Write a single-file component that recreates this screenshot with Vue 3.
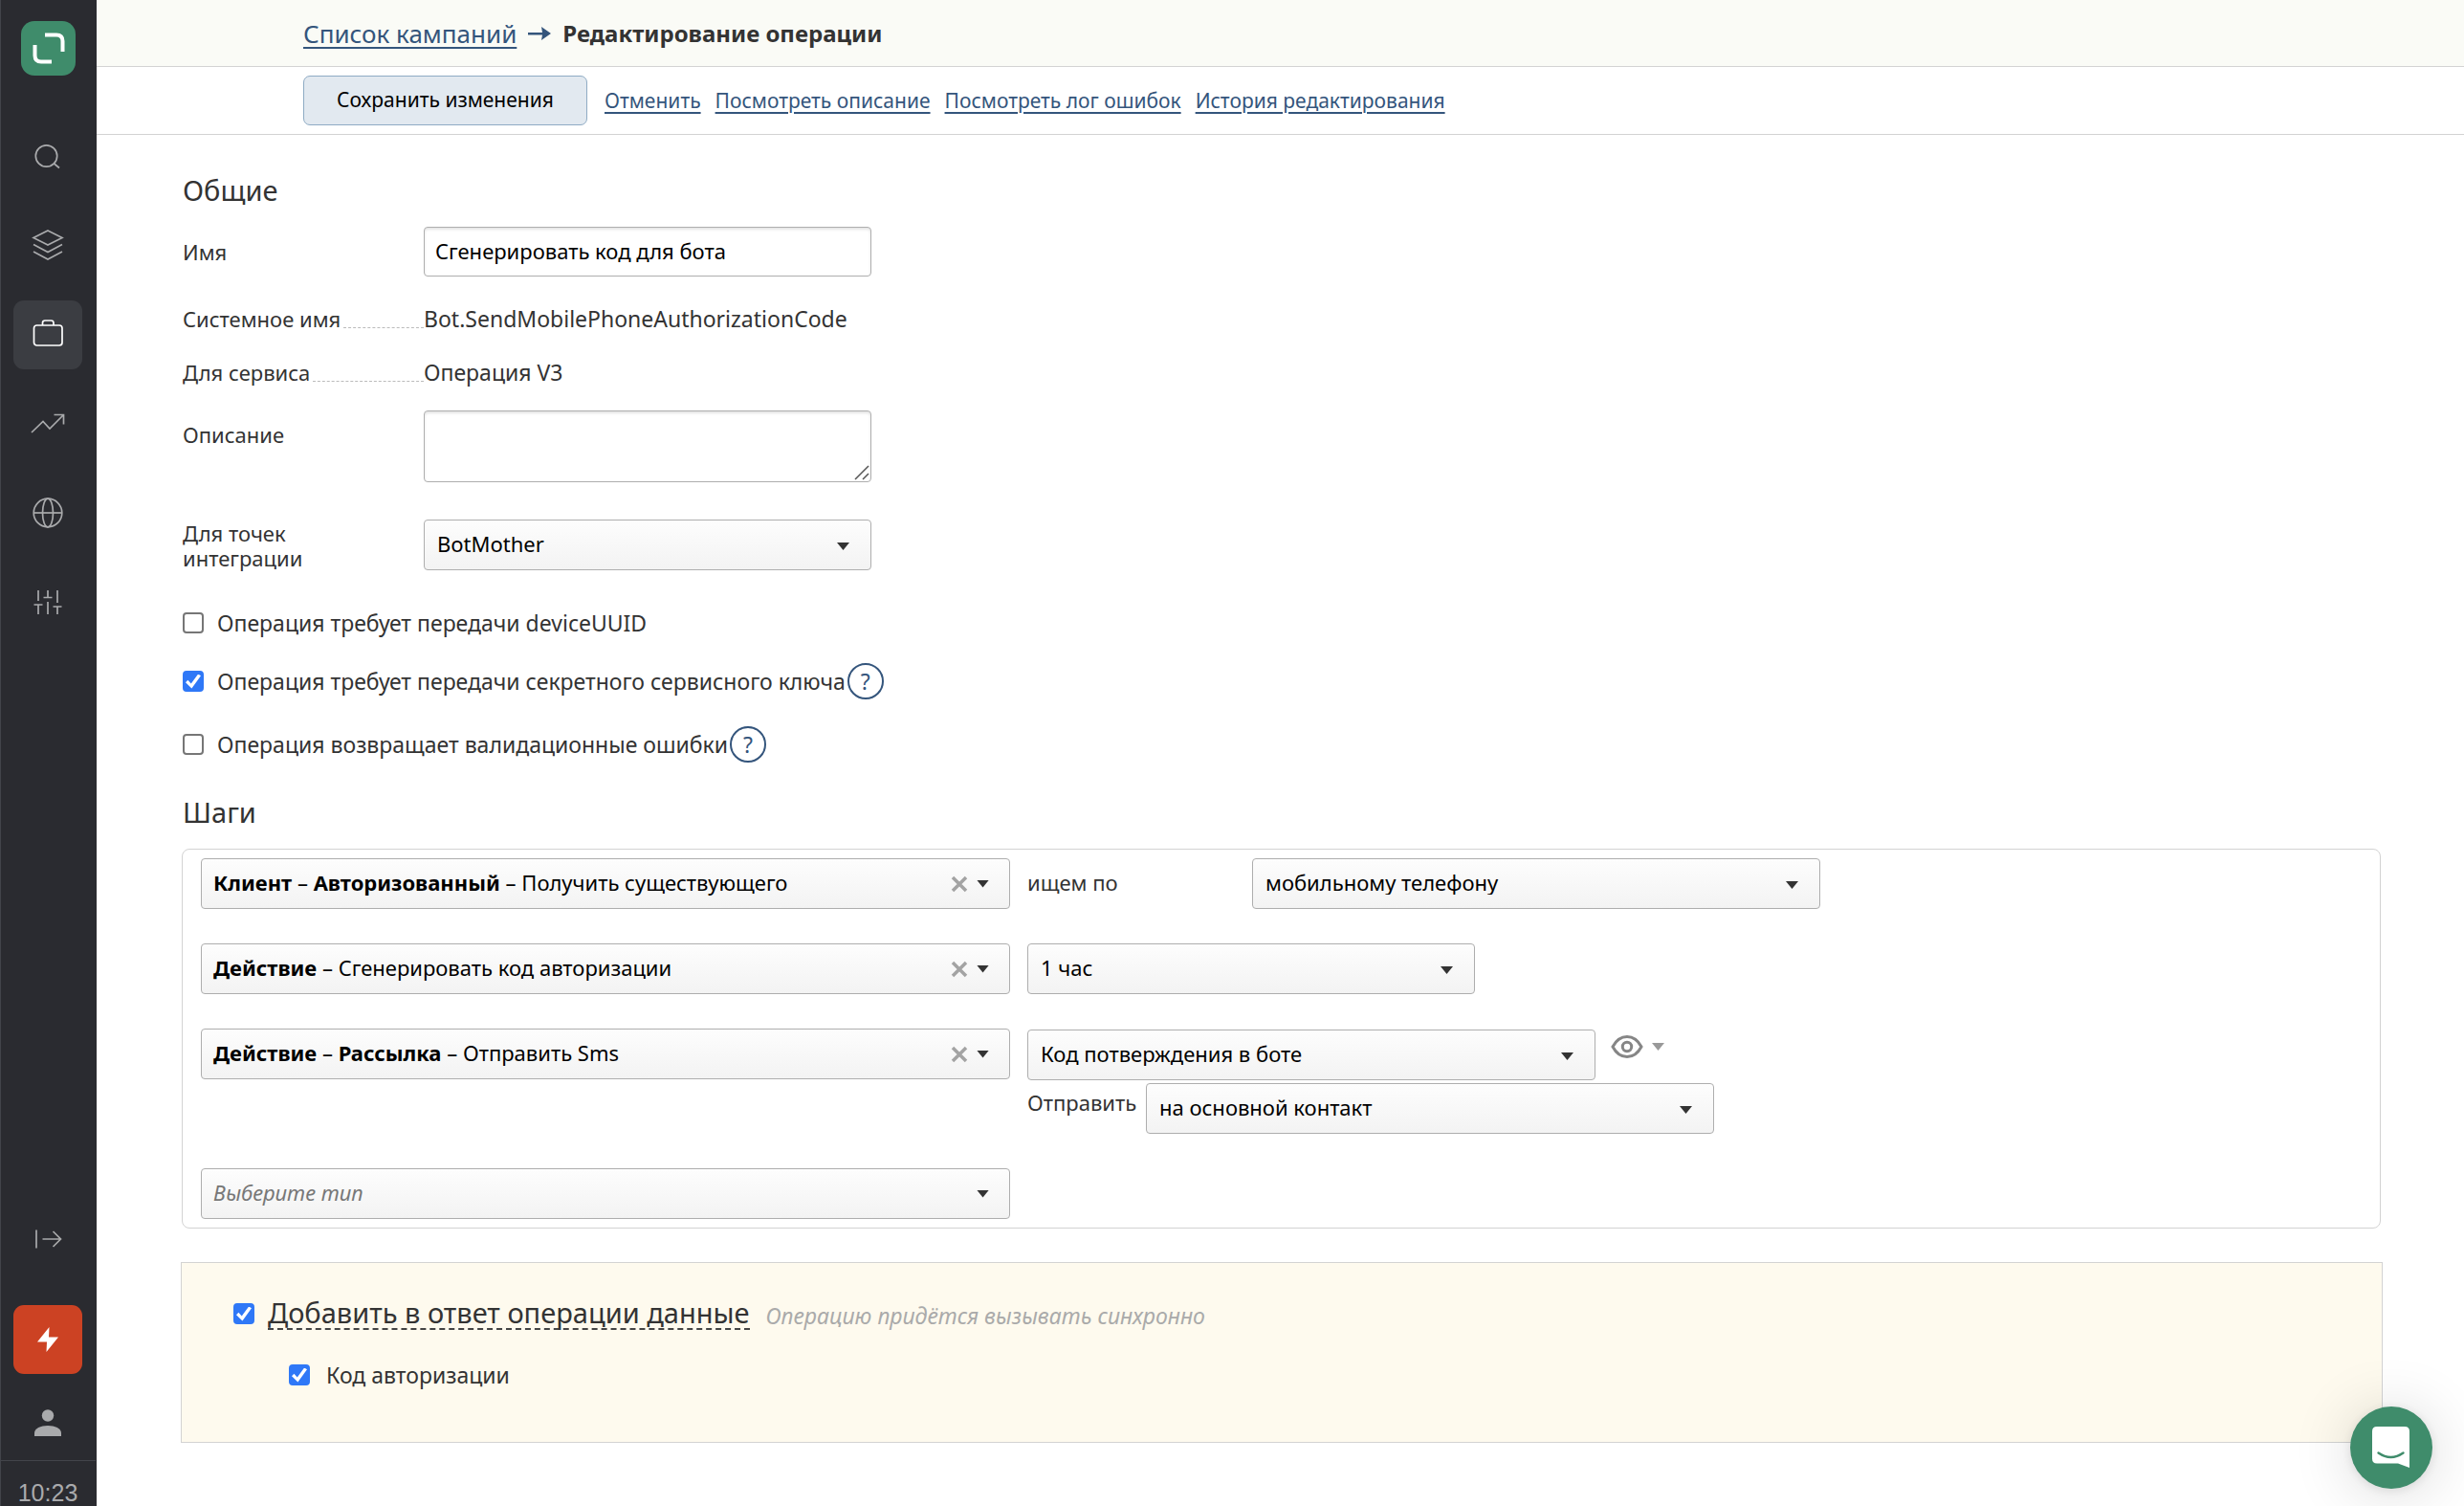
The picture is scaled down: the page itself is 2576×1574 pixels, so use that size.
<script setup>
import { ref } from 'vue'

const navItems = [
  { id: 'search', label: 'Поиск' },
  { id: 'layers', label: 'Слои' },
  { id: 'briefcase', label: 'Кампании', active: true },
  { id: 'trend', label: 'Отчёты' },
  { id: 'globe', label: 'Интеграции' },
  { id: 'sliders', label: 'Настройки' },
]

const toolbarLinks = ['Отменить', 'Посмотреть описание', 'Посмотреть лог ошибок', 'История редактирования']

const name = ref('Сгенерировать код для бота')
const description = ref('')

const flags = ref([
  { id: 'uuid', text: 'Операция требует передачи deviceUUID', checked: false, help: false },
  { id: 'secret', text: 'Операция требует передачи секретного сервисного ключа', checked: true, help: true },
  { id: 'validation', text: 'Операция возвращает валидационные ошибки', checked: false, help: true },
])

const steps = [
  { kind: 'find', path: ['Клиент', 'Авторизованный'], action: 'Получить существующего' },
  { kind: 'code', path: ['Действие'], action: 'Сгенерировать код авторизации' },
  { kind: 'send', path: ['Действие', 'Рассылка'], action: 'Отправить Sms' },
]

const respond = ref(true)
const respondCode = ref(true)
</script>

<template>
  <div class="page">
    <nav class="sidebar" aria-label="Главное меню">
      <a href="#" class="logo" aria-label="На главную">
        <svg width="57" height="57" viewBox="0 0 57 57" fill="none" stroke="#fff" stroke-width="4">
          <path d="M25 14.500H37Q43.500 14.500 43.500 21V32" />
          <path d="M14.500 25V36Q14.500 42.500 21 42.500H32" />
        </svg>
      </a>

      <a
        v-for="item in navItems"
        :key="item.id"
        href="#"
        class="nav-item"
        :class="{ active: item.active }"
        :aria-label="item.label"
      >
        <svg width="36" height="36" viewBox="0 0 36 36" fill="none" stroke="currentColor" stroke-width="1.700">
          <template v-if="item.id === 'search'">
            <circle cx="16.500" cy="17" r="11.200" />
            <path d="M24.500 25L30 29.500" />
          </template>
          <template v-else-if="item.id === 'layers'">
            <path d="M18 2L33 9.500L18 17L3 9.500Z" />
            <path d="M3 16.500L18 24.500L33 16.500M3 24L18 32L33 24" />
          </template>
          <template v-else-if="item.id === 'briefcase'">
            <rect x="3.500" y="8" width="29.500" height="21" rx="3" />
            <path d="M12.500 8V5.500Q12.500 3 15 3H21.500Q24 3 24 5.500V8" />
          </template>
          <template v-else-if="item.id === 'trend'">
            <path d="M1 27L13 15.500L20 23L34 9M24.500 8.500H34.500V18.500" />
          </template>
          <template v-else-if="item.id === 'globe'">
            <circle cx="18" cy="18" r="14.800" />
            <ellipse cx="18" cy="18" rx="5.500" ry="14.800" />
            <path d="M3 18H33" />
          </template>
          <template v-else>
            <path d="M8 6V17M3.500 21H12.500M8 21V31M18 6V13M13.500 13.500H22.500M18 18V31M28 6V19M23.500 23H32.500M28 23V31" />
          </template>
        </svg>
      </a>

      <div class="spacer"></div>

      <button class="nav-item collapse" aria-label="Развернуть меню">
        <svg width="30" height="24" viewBox="0 0 30 24" fill="none" stroke="currentColor" stroke-width="1.700">
          <path d="M3 2.500V21.500M9.500 12H28.500M20.500 4L28.500 12L20.500 20" />
        </svg>
      </button>
      <button class="nav-item alert" aria-label="События">
        <svg width="24" height="28" viewBox="0 0 24 28" fill="#fff"><path d="M13.500 1L1 16.500H11L10.500 27L23 11.500H13Z" /></svg>
      </button>
      <a href="#" class="user" aria-label="Профиль">
        <svg width="28" height="28" viewBox="0 0 28 28" fill="currentColor">
          <circle cx="14" cy="6.500" r="6.200" />
          <path d="M0 28V24.500C0 20 6.500 17 14 17S28 20 28 24.500V28Z" />
        </svg>
      </a>
      <div class="clock">10:23</div>
    </nav>

    <main class="main">
      <header class="crumbs">
        <a href="#" class="link">Список кампаний</a>
        <svg width="24" height="16" viewBox="0 0 24 16" fill="#34557c"><path d="M0 7H15L14 1L24 8L14 15L15 9.500H0Z" /></svg>
        <h1>Редактирование операции</h1>
      </header>

      <div class="toolbar">
        <button class="save">Сохранить изменения</button>
        <a v-for="text in toolbarLinks" :key="text" href="#" class="link">{{ text }}</a>
      </div>

      <form class="content" @submit.prevent>
        <h2>Общие</h2>

        <div class="field name-field">
          <label for="name" class="field-label">Имя</label>
          <input id="name" v-model="name" type="text" class="text-input" />
        </div>

        <dl class="facts">
          <div class="fact">
            <dt>Системное имя</dt>
            <dd>Bot.SendMobilePhoneAuthorizationCode</dd>
          </div>
          <div class="fact">
            <dt>Для сервиса</dt>
            <dd>Операция V3</dd>
          </div>
        </dl>

        <div class="field description-field">
          <label for="description" class="field-label">Описание</label>
          <div class="area">
            <textarea id="description" v-model="description" class="text-input"></textarea>
            <svg class="grip" width="18" height="18" viewBox="0 0 18 18" stroke="#555" stroke-width="1.500">
              <path d="M2 16L16 2M10 16L16 10" />
            </svg>
          </div>
        </div>

        <div class="field points-field">
          <label for="points" class="field-label">Для точек интеграции</label>
          <div class="select medium">
            <select id="points"><option>BotMother</option></select>
            <i class="caret"></i>
          </div>
        </div>

        <div class="flags">
          <div v-for="flag in flags" :key="flag.id" class="flag">
            <input :id="flag.id" v-model="flag.checked" type="checkbox" />
            <label :for="flag.id">{{ flag.text }}</label>
            <button v-if="flag.help" type="button" class="help" aria-label="Подсказка">?</button>
          </div>
        </div>

        <h2>Шаги</h2>

        <section class="steps" aria-label="Шаги">
          <div v-for="step in steps" :key="step.action" class="step">
            <div class="picker">
              <button type="button" class="picker-value" aria-haspopup="listbox">
                <template v-for="part in step.path" :key="part"><b>{{ part }}</b> – </template>{{ step.action }}
              </button>
              <button type="button" class="clear" aria-label="Очистить">
                <svg width="18" height="18" viewBox="0 0 18 18" stroke="#a3a3a3" stroke-width="3.500"><path d="M2 2L16 16M16 2L2 16" /></svg>
              </button>
              <i class="caret"></i>
            </div>

            <template v-if="step.kind === 'find'">
              <label for="find-by" class="find-label">ищем по</label>
              <div class="select wide">
                <select id="find-by"><option>мобильному телефону</option></select>
                <i class="caret"></i>
              </div>
            </template>

            <div v-else-if="step.kind === 'code'" class="select medium">
              <select aria-label="Срок действия кода"><option>1 час</option></select>
              <i class="caret"></i>
            </div>

            <div v-else class="send">
              <div class="send-row">
                <div class="select wide">
                  <select aria-label="Шаблон рассылки"><option>Код потверждения в боте</option></select>
                  <i class="caret"></i>
                </div>
                <button type="button" class="preview" aria-label="Предпросмотр">
                  <svg width="34" height="26" viewBox="0 0 34 26" fill="none" stroke="#868686" stroke-width="3">
                    <path d="M2 13C6 5.500 11 2.500 17 2.500S28 5.500 32 13C28 20.500 23 23.500 17 23.500S6 20.500 2 13Z" />
                    <circle cx="17" cy="13" r="4.700" />
                  </svg>
                  <i class="caret pale"></i>
                </button>
              </div>
              <div class="send-row target">
                <label for="contact">Отправить</label>
                <div class="select wide">
                  <select id="contact"><option>на основной контакт</option></select>
                  <i class="caret"></i>
                </div>
              </div>
            </div>
          </div>

          <div class="step">
            <div class="picker">
              <button type="button" class="picker-value empty" aria-haspopup="listbox">Выберите тип</button>
              <i class="caret"></i>
            </div>
          </div>
        </section>

        <section class="response">
          <div class="response-head">
            <input id="respond" v-model="respond" type="checkbox" />
            <label for="respond" class="response-title">Добавить в ответ операции данные</label>
            <em>Операцию придётся вызывать синхронно</em>
          </div>
          <div class="response-item">
            <input id="respond-code" v-model="respondCode" type="checkbox" />
            <label for="respond-code">Код авторизации</label>
          </div>
        </section>
      </form>
    </main>

    <button class="chat" aria-label="Чат с поддержкой">
      <svg width="40" height="44" viewBox="0 0 40 44">
        <path d="M5 0H34Q39 0 39 5V43L27 38.500H5Q0 38.500 0 33.500V5Q0 0 5 0Z" fill="#fff" />
        <path d="M6.500 27.500Q19.500 36.500 32.500 27.500" fill="none" stroke="#3f8c6b" stroke-width="2.400" stroke-linecap="round" />
      </svg>
    </button>
  </div>
</template>

<style>
body {
  margin: 0;
  background: #fff;
}
</style>

<style scoped>
.page {
  display: flex;
  min-height: 100vh;
  font-family: 'Noto Sans', 'Open Sans', sans-serif;
  font-size: 22px;
  line-height: 26px;
  color: #333;
}

.page * {
  box-sizing: border-box;
}

button,
input,
select,
textarea {
  margin: 0;
  font: inherit;
}

button {
  padding: 0;
  border: 0;
  background: none;
  cursor: pointer;
}

/* Sidebar */
.sidebar {
  position: sticky;
  top: 0;
  display: flex;
  flex: none;
  flex-direction: column;
  align-items: center;
  width: 101px;
  height: 100vh;
  padding-top: 22px;
  padding-right: 1px;
  background: #2a2b30;
  box-shadow: inset 1px 0 #42444a;
  color: #a9aaac;
}

.logo {
  flex: none;
  height: 57px;
  margin-bottom: 28px;
  border-radius: 14px;
  background: #3f8c6b;
}

.nav-item {
  display: flex;
  flex: none;
  align-items: center;
  justify-content: center;
  width: 72px;
  height: 72px;
  margin-top: 21px;
  border-radius: 11px;
  color: inherit;
}

.nav-item.active {
  background: #3b3d42;
  color: #fff;
}

.spacer {
  flex: 1;
}

.collapse {
  margin: 0 0 33px;
}

.alert {
  margin: 0;
  background: #cc4223;
}

.user {
  display: flex;
  flex: none;
  margin: 37px 0 25px;
  color: #a9aaac;
}

.clock {
  flex: none;
  align-self: stretch;
  height: 48px;
  padding-top: 19px;
  border-top: 1px solid #42444a;
  font-family: 'Liberation Sans', sans-serif;
  font-size: 25px;
  line-height: 28px;
  text-align: center;
}

/* Header */
.main {
  flex: 1;
  min-width: 0;
}

.crumbs,
.toolbar {
  display: flex;
  align-items: center;
  padding-left: 216px;
  border-bottom: 1px solid #d3d3d3;
}

.crumbs {
  gap: 12px;
  height: 70px;
  background: #fafbf6;
  font-size: 26px;
}

.crumbs h1 {
  margin: 0;
  font-size: 24px;
}

.link {
  color: #34557c;
  text-decoration: underline;
  text-decoration-thickness: 2px;
  text-underline-offset: 4px;
}

.toolbar {
  gap: 15px;
  height: 71px;
  font-size: 21px;
}

.save {
  width: 297px;
  height: 52px;
  margin-right: 3px;
  padding-bottom: 3px;
  border: 1px solid #8fabc4;
  border-radius: 7px;
  background: #e2e9f0;
  color: #000;
}

/* Form */
.content {
  padding: 38px 85px 67px 88px;
}

h2 {
  margin: 0 0 18px 2px;
  font-size: 29px;
  font-weight: 400;
  line-height: 40px;
}

.field,
.facts,
.flags {
  margin-left: 2px;
}

.field {
  display: flex;
  align-items: center;
}

.field-label {
  width: 252px;
  padding-right: 100px;
}

.text-input {
  display: block;
  width: 468px;
  border: 1px solid #aeaeae;
  border-radius: 4px;
  background: #fff;
  box-shadow: inset 0 2px 3px #e4e4e4;
  color: #000;
}

input.text-input {
  height: 52px;
  padding: 0 11px 3px;
}

.facts {
  display: grid;
  gap: 30px;
  margin-top: 31px;
  margin-bottom: 27px;
}

.fact {
  display: flex;
}

dt {
  display: flex;
  width: 252px;
  white-space: nowrap;
}

dt::after {
  flex: 1;
  height: 22px;
  margin-left: 3px;
  border-bottom: 1px dashed #bbb;
  content: '';
}

dd {
  margin: 0;
  font-size: 23px;
}

.area {
  position: relative;
}

textarea.text-input {
  height: 75px;
  padding: 8px 11px;
  resize: none;
}

.grip {
  position: absolute;
  right: 1px;
  bottom: 1px;
}

.description-field {
  align-items: flex-start;
}

.description-field .field-label {
  padding-top: 12px;
}

.points-field {
  margin-top: 39px;
}

.select,
.picker {
  position: relative;
  flex: none;
  height: 53px;
  border: 1px solid #aeaeae;
  border-radius: 4px;
  background: linear-gradient(#fdfdfd, #f3f3f3);
  color: #000;
}

.select.medium {
  width: 468px;
}

.select.wide {
  width: 594px;
}

select {
  width: 100%;
  height: 100%;
  padding: 0 50px 3px 13px;
  border: 0;
  appearance: none;
  background: none;
  color: #000;
}

.caret {
  width: 13px;
  height: 8px;
  background: #333;
  clip-path: polygon(0 0, 100% 0, 50% 100%);
}

.select .caret {
  position: absolute;
  top: 23px;
  right: 22px;
  pointer-events: none;
}

input[type='checkbox'] {
  display: grid;
  flex: none;
  place-items: center;
  width: 22px;
  height: 22px;
  border: 2px solid #767676;
  border-radius: 4px;
  appearance: none;
  background: #fff;
}

input[type='checkbox']:checked {
  border-color: #2f78f7;
  background: #2f78f7;
}

input[type='checkbox']:checked::after {
  width: 16px;
  height: 15px;
  background: #fff;
  clip-path: polygon(0 58%, 15% 42%, 36% 66%, 82% 0, 100% 12%, 40% 100%);
  content: '';
}

.flags {
  margin-top: 40px;
  margin-bottom: 31px;
  font-size: 23px;
}

.flag {
  display: flex;
  align-items: center;
  height: 40px;
}

.flag:first-child {
  height: 30px;
}

.flag + .flag {
  margin-top: 26px;
}

.flag label {
  margin-left: 14px;
}

.help {
  width: 38px;
  height: 38px;
  margin-left: 2px;
  border: 2px solid #34557c;
  border-radius: 50%;
  color: #34557c;
  line-height: 32px;
}

/* Steps */
.steps {
  display: grid;
  gap: 36px;
  margin-left: 1px;
  margin-right: 2px;
  padding: 9px 18px 9px 19px;
  border: 1px solid #d3d3d3;
  border-radius: 8px;
}

.step {
  display: flex;
  align-items: flex-start;
  gap: 18px;
}

.picker {
  display: flex;
  align-items: center;
  width: 846px;
  padding: 0 21px 0 12px;
}

.picker-value {
  flex: 1;
  height: 100%;
  padding-bottom: 3px;
  color: #000;
  text-align: left;
}

.picker-value.empty {
  color: #777;
  font-style: italic;
}

.clear {
  display: flex;
  margin-right: 9px;
}

.find-label {
  width: 217px;
  padding-top: 12px;
}

.send {
  padding-top: 1px;
}

.send-row {
  display: flex;
}

.preview {
  display: flex;
  align-items: center;
  gap: 9px;
  height: 26px;
  margin: 5px 0 0 16px;
}

.caret.pale {
  background: #999;
}

.target {
  gap: 10px;
  margin-top: 3px;
}

.target label {
  width: 114px;
  padding-top: 7px;
}

/* Response */
.response {
  height: 189px;
  margin-top: 35px;
  padding: 36px 54px;
  border: 1px solid #d3d3d3;
  background: #fefaee;
}

.response-head,
.response-item {
  display: flex;
  align-items: center;
}

.response-title {
  margin: 0 17px 0 14px;
  border-bottom: 2px dashed #444;
  font-size: 29px;
  line-height: 32px;
}

.response-head em {
  padding-top: 3px;
  color: #aaa;
  font-size: 23px;
}

.response-item {
  margin: 34px 0 0 58px;
  font-size: 23px;
}

.response-item label {
  margin-left: 17px;
}

/* Chat launcher */
.chat {
  position: fixed;
  right: 33px;
  bottom: 18px;
  display: flex;
  align-items: center;
  justify-content: center;
  width: 86px;
  height: 86px;
  border-radius: 50%;
  background: #3f8c6b;
  box-shadow: 0 2px 12px rgba(0, 0, 0, 0.1), 0 4px 64px rgba(0, 0, 0, 0.16);
}
</style>
